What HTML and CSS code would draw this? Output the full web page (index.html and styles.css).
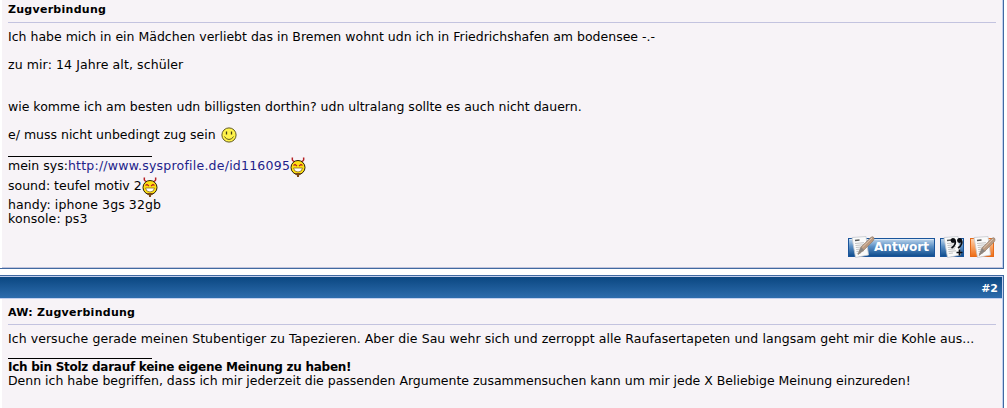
FILE: index.html
```html
<!DOCTYPE html>
<html lang="de">
<head>
  <meta charset="UTF-8">
  <title>Zugverbindung</title>
  <link rel="stylesheet" href="styles.css">
</head>
<body>
  <svg class="defs" width="0" height="0">
    <defs>
      <linearGradient id="blue" x1="0" y1="0" x2="0" y2="1">
        <stop offset="0" stop-color="#c3d9ee"/>
        <stop offset="0.45" stop-color="#5b8fc4"/>
        <stop offset="1" stop-color="#0d4a8c"/>
      </linearGradient>
      <linearGradient id="orange" x1="0" y1="0" x2="0" y2="1">
        <stop offset="0" stop-color="#ffd3ae"/>
        <stop offset="1" stop-color="#ef6c13"/>
      </linearGradient>
      <symbol id="paper" viewBox="0 0 20 22">
        <path d="M1 1.500 15 .5 17.500 19 4.500 21.500Z" fill="#fafafa" stroke="#c4c8ce" stroke-width=".8"/>
        <path d="M4 4.500 8.500 4" stroke="#555" stroke-width="1.300"/>
        <path d="M4 7.500 13 6.700M4.500 9.500 13 8.700M4.800 11.500 13 10.700M5.200 13.500 12 12.800M5.500 15.500 13 14.800M5.800 17.500 10 17" stroke="#b4b4b4" stroke-width=".8"/>
      </symbol>
      <symbol id="pen" viewBox="0 0 18 19">
        <path d="M1 18.500 4 11 14 1.300Q16-.2 17 1.800 17.200 3.500 16 5L7 14Z" fill="#bb9a80" stroke="#94806f" stroke-width=".7"/>
        <path d="M1 18.500 4 11 7 14Z" fill="#8a8581"/>
        <path d="M5.500 11 15 2" stroke="#dcc6b4" stroke-width="1"/>
      </symbol>
      <symbol id="devil" viewBox="0 0 16 20">
        <path d="M4.500 4.500Q1.500 4 2.500.5M11.500 4.500Q14.500 4 13.500.5" fill="none" stroke="#b52025" stroke-width="1.500"/>
        <circle cx="8" cy="10.500" r="7" fill="#ffe012" stroke="#2b2006"/>
        <path d="M3.500 8.500 5 7.500 7 9M12.500 8.500 11 7.500 9 9" fill="none" stroke="#b52025" stroke-width="1.200"/>
        <path d="M3.500 11h9q-.5 4-4.500 4t-4.500-4z" fill="#fff" stroke="#8b6d18" stroke-width=".8"/>
        <path d="M5 16h6v1l-2 1.500V20H7v-1.500L5 17z" fill="#7a4a14"/>
      </symbol>
    </defs>
  </svg>

  <div class="post first">
    <div class="content">
      <div class="title">Zugverbindung</div>
      <div class="message">
        <div>Ich habe mich in ein Mädchen verliebt das in Bremen wohnt udn ich in Friedrichshafen am bodensee -.-</div>
        <br>
        <div class="loose">zu mir: 14 Jahre alt, schüler</div>
        <br>
        <br>
        <div>wie komme ich am besten udn billigsten dorthin? udn ultralang sollte es auch nicht dauern.</div>
        <br>
        <div class="line"><span>e/ muss nicht unbedingt zug sein</span>
          <svg class="smile" width="16" height="16" viewBox="0 0 16 16">
            <circle cx="8" cy="8" r="7.100" fill="#fff34a" stroke="#625a20"/>
            <path d="M5.500 4.500v3M10.500 4.500v3" stroke="#453e12" stroke-width="1.300"/>
            <path d="M3.500 9.500q1.500 3 4.500 3t4.500-3" fill="none" stroke="#625a20"/>
          </svg>
        </div>
      </div>
      <div class="signature">
        <div class="line tall"><span>mein sys:</span><a class="link" href="#">http://www.sysprofile.de/id116095</a><svg class="devil" width="16" height="20"><use href="#devil"/></svg></div>
        <div class="line"><span>sound: teufel motiv 2</span><svg class="devil" width="16" height="20"><use href="#devil"/></svg></div>
        <div class="after loose">handy: iphone 3gs 32gb</div>
        <div class="loose">konsole: ps3</div>
      </div>
      <div class="buttons">
        <svg width="88" height="23" viewBox="0 0 88 23">
          <rect x=".5" y="2.500" width="86" height="18" fill="url(#blue)" stroke="#1a549b"/>
          <path d="M1.500 3.500h84" stroke="#dbe8f5"/>
          <use href="#paper" x="3" y="0" width="20" height="22"/>
          <use href="#pen" x="9" y="0" width="18" height="19"/>
          <text class="button-text" x="26" y="15" textLength="55" lengthAdjust="spacingAndGlyphs">Antwort</text>
        </svg>
        <svg width="26" height="23" viewBox="0 0 26 23">
          <rect x=".5" y="2.500" width="23" height="18" fill="url(#blue)" stroke="#1a549b"/>
          <use href="#paper" x="3" y="0" width="20" height="22"/>
          <g fill="none" stroke="#0b0d12" stroke-width="1.700">
            <circle cx="13" cy="4.500" r="1.600" fill="#0b0d12"/>
            <path d="M14.500 3.500Q17 8.500 11.500 12"/>
            <circle cx="19.500" cy="4.500" r="1.600" fill="#0b0d12"/>
            <path d="M21 3.500Q23.500 8.500 18 12M19.500 13.500v6M16.500 16.500h6"/>
          </g>
        </svg>
        <svg width="27" height="23" viewBox="0 0 27 23">
          <rect x=".5" y="2.500" width="23" height="18" fill="url(#orange)" stroke="#e56a1a"/>
          <use href="#paper" x="3" y="0" width="20" height="22"/>
          <use href="#pen" x="8" y="1" width="18" height="19"/>
        </svg>
      </div>
    </div>
  </div>

  <div class="post second">
    <div class="head"><span>#2</span></div>
    <div class="content">
      <div class="title">AW: Zugverbindung</div>
      <div class="message wide">Ich versuche gerade meinen Stubentiger zu Tapezieren. Aber die Sau wehr sich und zerroppt alle Raufasertapeten und langsam geht mir die Kohle aus...</div>
      <div class="signature">
        <b class="motto">Ich bin Stolz darauf keine eigene Meinung zu haben!</b>
        <div class="quote">Denn ich habe begriffen, dass ich mir jederzeit die passenden Argumente zusammensuchen kann um mir jede X Beliebige Meinung einzureden!</div>
      </div>
    </div>
  </div>
</body>
</html>
```
FILE: styles.css
```css
html, body {
  margin: 0;
  padding: 0;
  background: #fff;
}
body {
  height: 408px;
  overflow: hidden;
  font: 12.5px/14px Verdana, "DejaVu Sans", sans-serif;
  color: #000;
  white-space: nowrap;
}
svg {
  display: block;
  flex: none;
}
.defs {
  position: absolute;
}
.post {
  box-sizing: border-box;
  width: 1004px;
  border-right: 1px solid #4169a1;
}
.first {
  height: 269px;
  border-bottom: 1px solid #4169a1;
}
.second {
  height: 133px;
  margin-top: 6px;
  border-top: 1px solid #4169a1;
}
.content {
  box-sizing: border-box;
  height: 268px;
  margin-left: 2px;
  padding: 0 6px;
  background: #f7f3f7;
  border-right: 1px solid #c2cfee;
  border-bottom: 1px solid #c2c4dc;
}
.title {
  box-sizing: border-box;
  height: 23px;
  padding-top: 3px;
  border-bottom: 1px solid #c3c3df;
  font-size: 11px;
  font-weight: bold;
  letter-spacing: 0.27px;
}
.message {
  padding-top: 7px;
}
.loose {
  letter-spacing: 0.1px;
}
.wide {
  letter-spacing: 0.063px;
}
.line {
  display: flex;
  height: 14px;
}
.smile {
  margin: -1px 0 0 5px;
}
.signature {
  margin-top: 14px;
  padding-top: 2px;
}
.signature::before {
  content: "";
  display: block;
  width: 144px;
  height: 1px;
  margin: -2px 0 2px;
  background: #000;
}
.tall {
  height: 20px;
}
.devil {
  margin-top: -2px;
}
.after {
  margin-top: 5px;
}
a {
  color: #22228a;
  text-decoration: none;
}
.link {
  letter-spacing: 0.23px;
}
.motto {
  display: block;
  font-size: 12px;
  letter-spacing: -0.26px;
}
.quote {
  letter-spacing: -0.01px;
}
.buttons {
  display: flex;
  justify-content: flex-end;
  gap: 4px;
  margin: 10px -1px 0 0;
}
.button-text {
  font: bold 12px "DejaVu Sans", sans-serif;
  fill: #fff;
}
.head {
  display: flex;
  box-sizing: border-box;
  justify-content: flex-end;
  height: 23px;
  padding: 5px 4px 0 0;
  border: solid #c2cfee;
  border-width: 1px 1px 1px 0;
  background: linear-gradient(#0b4781, #2d6cad);
  color: #fff;
  font-size: 11px;
  font-weight: bold;
}
.second .content {
  height: 110px;
  padding-top: 3px;
  border-bottom: 0;
}
.second .title {
  padding-top: 4px;
}
.second .signature {
  margin-top: 12px;
}
.second .signature::before {
  margin-bottom: 1px;
}
```
